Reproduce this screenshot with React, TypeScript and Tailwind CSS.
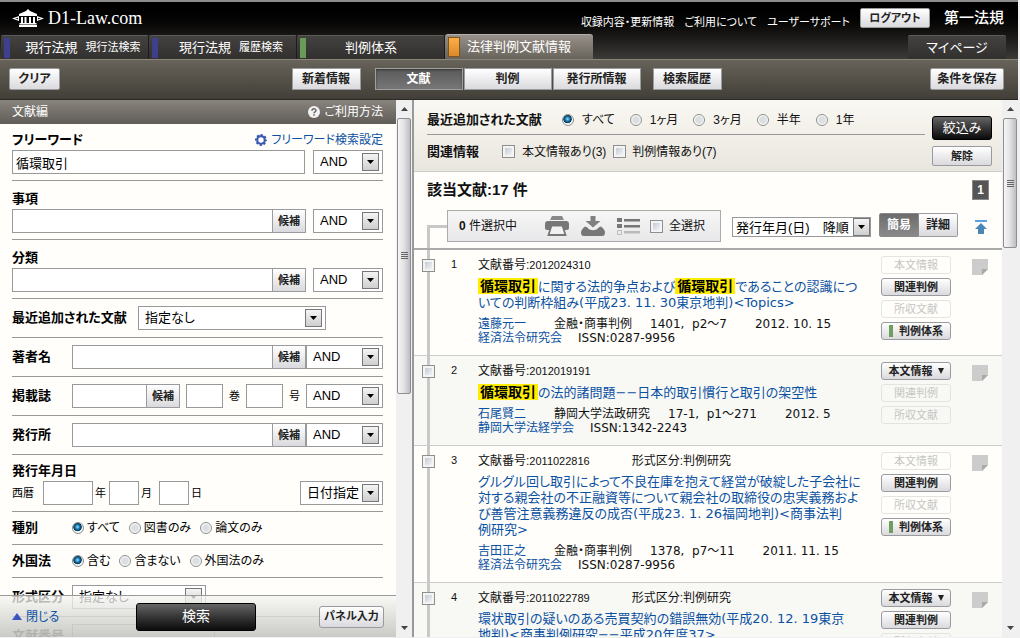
import type { ReactNode } from 'react';
import clsx from 'clsx';

const link = 'text-[#0b51a2] hover:underline';

function Button({ children, className }: { children: ReactNode; className?: string }) {
  return (
    <button
      type="button"
      className={clsx(
        'shrink-0 flex items-center justify-center border border-[#9a9b9f] bg-gradient-to-b from-white to-[#dadade] font-bold text-[#222] whitespace-nowrap',
        className
      )}
    >
      {children}
    </button>
  );
}

function DarkButton({ children, className }: { children: ReactNode; className?: string }) {
  return (
    <button
      type="button"
      className={clsx(
        'shrink-0 rounded-[3px] border border-black bg-gradient-to-b from-[#666] to-[#0c0c0c] text-white whitespace-nowrap',
        className
      )}
    >
      {children}
    </button>
  );
}

function Select({ label, value, className, small }: { label: string; value: string; className?: string; small?: boolean }) {
  return (
    <div className={clsx('relative shrink-0', small ? 'h-5' : 'h-6', className)}>
      <select
        aria-label={label}
        className={clsx(
          'appearance-none block w-full h-full border border-[#999] bg-white text-[13px] text-black',
          small ? 'pl-[3px]' : 'pl-[6px]'
        )}
      >
        <option>{value}</option>
      </select>
      <span
        className={clsx(
          'pointer-events-none absolute flex items-center justify-center w-[17px] border border-[#777] bg-gradient-to-b from-[#f4f4f4] to-[#cfcfcf]',
          small ? 'inset-y-px right-px' : 'inset-y-[3px] right-1'
        )}
      >
        <svg width="7" height="4" viewBox="0 0 7 4">
          <path d="M0 0h7L3.5 4z" fill="#000" />
        </svg>
      </span>
    </div>
  );
}

function TextBox({ label, className, value }: { label: string; className?: string; value?: string }) {
  return (
    <input
      type="text"
      aria-label={label}
      defaultValue={value}
      className={clsx('h-6 min-w-0 border border-[#999] bg-white px-[3px] text-[13px] text-black', className)}
    />
  );
}

function CandidateInput({ label, className }: { label: string; className?: string }) {
  return (
    <div className={clsx('flex', className)}>
      <TextBox label={label} className="flex-1 border-r-0" />
      <Button className="w-[34px] h-6 text-[11px]">候補</Button>
    </div>
  );
}

function Radio({ name, label, checked, className }: { name: string; label: string; checked?: boolean; className?: string }) {
  return (
    <label className={clsx('flex items-center whitespace-nowrap', className)}>
      <input
        type="radio"
        name={name}
        defaultChecked={checked}
        className="appearance-none size-3 shrink-0 rounded-full border border-[#8e8f8f] bg-[radial-gradient(circle,#dcdfe2_40%,#fff_75%)] checked:bg-[radial-gradient(circle_at_45%_40%,#7fd0f0_5%,#0f6fa8_30%,#0b3353_48%,#f0f4f6_56%)]"
      />
      {label}
    </label>
  );
}

function CheckBox({ label, children, className }: { label?: string; children?: ReactNode; className?: string }) {
  return (
    <label className={clsx('flex items-center whitespace-nowrap', className)}>
      <input
        type="checkbox"
        aria-label={label}
        className="appearance-none size-[13px] shrink-0 border border-[#8e8f8f] bg-gradient-to-br from-[#b9bfca] to-white shadow-[inset_0_0_0_2px_#f4f4f4] checked:bg-[#0f6fa8]"
      />
      {children}
    </label>
  );
}

function Scrollbar({ thumb }: { thumb: string }) {
  return (
    <div aria-hidden="true" className="w-4 shrink-0 flex flex-col bg-[#f0f0f0] px-px">
      <div className="h-[18px] flex items-center justify-center">
        <svg width="7" height="4" viewBox="0 0 7 4">
          <path d="M0 4h7L3.5 0z" fill="#444" />
        </svg>
      </div>
      <div className="flex-1 min-h-0">
        <div
          className={clsx(
            'flex flex-col items-center justify-center gap-px rounded-[2px] border border-[#8d8d92] bg-gradient-to-r from-[#f6f6f6] via-[#e2e2e4] to-[#bdbdc2]',
            thumb
          )}
        >
          {[0, 1, 2, 3].map((i) => (
            <span key={i} className="w-[7px] h-px bg-[#666]" />
          ))}
        </div>
      </div>
      <div className="h-[18px] flex items-center justify-center">
        <svg width="7" height="4" viewBox="0 0 7 4">
          <path d="M0 0h7L3.5 4z" fill="#444" />
        </svg>
      </div>
    </div>
  );
}

const tabs = [
  { name: '現行法規', sub: '現行法検索', bar: 'bg-[#3f3f8f]' },
  { name: '現行法規', sub: '履歴検索', bar: 'bg-[#3f3f8f]' },
  { name: '判例体系', sub: '', bar: 'bg-[#6a9a58]' },
];

function Header() {
  return (
    <header>
      <div className="border-t-2 border-[#8c8c8c] bg-gradient-to-b from-black to-[#3d3b38] text-white">
        <div className="h-8 flex items-center pl-3 pr-[14px]">
          <svg width="32" height="18" viewBox="0 0 32 18" fill="#fff">
            <path d="M16 0l2 2 7 3v2H7V5l7-3z" />
            <path d="M9 8h2v6H9zM12.5 8h2v6h-2zM17 8h2v6h-2zM21 8h2v6h-2zM7.500 14h17v1.500h-17zM7 16h18v2H7z" />
            <path d="M0 9.500l7-2.500v5zM32 9.500l-7-2.500v5z" />
            <path d="M3 9.500l3-.8v1.600zM29 9.500l-3-.8v1.600z" fill="#111" />
          </svg>
          <h1 className="ml-1 flex-1 text-[18px] leading-6 font-['Liberation_Serif',serif]">D1-Law.com</h1>
          <nav className="flex gap-[10px] pt-2 pr-[10px] text-[11px]">
            <a href="#updates">収録内容・更新情報</a>
            <a href="#about">ご利用について</a>
            <a href="#support">ユーザーサポート</a>
          </nav>
          <Button className="w-[70px] h-5 rounded-[2px] text-[11px]">ログアウト</Button>
          <span className="ml-[14px] text-[15px] font-medium">第一法規</span>
        </div>
        <nav className="h-[25px] flex items-end pl-px pr-3 text-[13px]">
          {tabs.map((tab, i) => (
            <a
              key={i}
              href={`#tab${i}`}
              className="w-[148px] h-6 flex items-center rounded-t-[2px] border-t border-r border-t-[#5d5b58] border-r-[#1d1c1b] bg-gradient-to-b from-[#434240] to-[#31302e] pl-[3px]"
            >
              <span className={clsx('w-[6px] h-5', tab.bar)} />
              <span className={clsx('flex-1 flex items-center justify-center gap-2 whitespace-nowrap', tab.sub ? 'pl-2' : 'pr-2')}>
                {tab.name}
                {tab.sub && <span className="text-[11px]">{tab.sub}</span>}
              </span>
            </a>
          ))}
          <a
            href="#bunken"
            className="w-[148px] h-[25px] flex items-center rounded-t-[3px] border-t border-[#b5aea8] bg-gradient-to-b from-[#98908a] to-[#67635a] pl-[3px] whitespace-nowrap"
          >
            <span className="mr-[7px] w-3 h-5 border border-[#7d5420] bg-gradient-to-b from-[#ffae45] to-[#d98a2b]" />
            法律判例文献情報
          </a>
          <a
            href="#mypage"
            className="ml-auto w-[98px] h-6 flex items-center justify-center rounded-t-[2px] border-t border-[#5d5b58] bg-gradient-to-b from-[#434240] to-[#31302e]"
          >
            マイページ
          </a>
        </nav>
      </div>
      <div className="h-[41px] grid grid-cols-[1fr_auto_1fr] items-start border-t border-b border-t-[#8a8578] border-b-[#2b2924] bg-gradient-to-b from-[#67635a] to-[#423f38] pt-2 pl-[9px] pr-[14px] text-[12px]">
        <Button className="w-[51px] h-[22px] rounded-[2px]">クリア</Button>
        <div className="flex">
          <Button className="w-[69px] h-[22px] mr-[14px]">新着情報</Button>
          <div className="flex gap-px">
            <button
              type="button"
              className="w-[88px] h-[22px] border border-[#a0a0a0] bg-gradient-to-b from-[#5a5a5a] to-[#777] text-white font-bold shadow-[inset_0_1px_2px_#333]"
            >
              文献
            </button>
            <Button className="w-[88px] h-[22px]">判例</Button>
            <Button className="w-[88px] h-[22px]">発行所情報</Button>
          </div>
          <Button className="w-[69px] h-[22px] ml-[12px]">検索履歴</Button>
        </div>
        <Button className="w-[74px] h-[22px] rounded-[2px] justify-self-end">条件を保存</Button>
      </div>
    </header>
  );
}

function Row({ label, children }: { label: string; children: ReactNode }) {
  return (
    <div className="flex items-center py-[7px] border-b border-[#999]">
      <span className="w-[60px] shrink-0 text-[13px] font-bold whitespace-nowrap">{label}</span>
      {children}
    </div>
  );
}

function SearchPanel() {
  return (
    <aside className="w-[414px] shrink-0 flex border-r-2 border-[#999]">
      <div className="relative flex-1 min-w-0 overflow-hidden bg-[#fffefa]">
        <div className="h-6 flex items-center justify-between bg-gradient-to-b from-[#89847e] to-[#605c57] pl-3 pr-[13px] text-[12px] text-white">
          <h2>文献編</h2>
          <a href="#help" className="flex items-center gap-1">
            <svg width="12" height="12" viewBox="0 0 12 12">
              <circle cx="6" cy="6" r="6" fill="#f2f2f2" />
              <path d="M4 4.700C4 2.200 8 2.300 8 4.500 8 5.900 6 5.800 6 7.300M6 8.300v1.500" fill="none" stroke="#6d6863" strokeWidth="1.500" />
            </svg>
            ご利用方法
          </a>
        </div>

        <form className="pl-3 pr-[13px] text-[12px] text-black">
          <div className="pt-[6px] pb-[6px] border-b border-[#999]">
            <div className="h-5 flex items-center justify-between">
              <span className="text-[13px] font-bold">フリーワード</span>
              <a href="#settings" className={clsx('flex items-center gap-1', link)}>
                <svg width="12" height="12" viewBox="0 0 12 12" fill="none" stroke="#3a5bb0">
                  <circle cx="6" cy="6" r="3.800" strokeWidth="2.200" />
                  <circle cx="6" cy="6" r="5.100" strokeWidth="1.800" strokeDasharray="2.100 1.905" strokeDashoffset="1" />
                </svg>
                フリーワード検索設定
              </a>
            </div>
            <div className="flex gap-2">
              <TextBox label="フリーワード" value="循環取引" className="flex-1" />
              <Select label="フリーワード条件" value="AND" className="w-[70px]" />
            </div>
          </div>
          {['事項', '分類'].map((name) => (
            <div key={name} className="pt-2 pb-[6px] border-b border-[#999]">
              <div className="h-5 flex items-center text-[13px] font-bold">{name}</div>
              <div className="flex gap-[7px]">
                <CandidateInput label={name} className="flex-1" />
                <Select label={`${name}条件`} value="AND" className="w-[70px]" />
              </div>
            </div>
          ))}
          <div className="flex items-center gap-[14px] py-[7px] border-b border-[#999]">
            <span className="w-28 text-[13px] font-bold whitespace-nowrap">最近追加された文献</span>
            <Select label="最近追加された文献" value="指定なし" className="w-[188px]" />
          </div>
          <Row label="著者名">
            <CandidateInput label="著者名" className="flex-1" />
            <Select label="著者名条件" value="AND" className="w-[77px]" />
          </Row>
          <Row label="掲載誌">
            <CandidateInput label="掲載誌" className="w-[108px]" />
            <TextBox label="巻" className="w-[37px] ml-[6px]" />
            <span className="mx-[6px] text-[11px]">巻</span>
            <TextBox label="号" className="w-[37px]" />
            <span className="ml-[6px] text-[11px]">号</span>
            <Select label="掲載誌条件" value="AND" className="w-[77px] ml-auto" />
          </Row>
          <Row label="発行所">
            <CandidateInput label="発行所" className="flex-1" />
            <Select label="発行所条件" value="AND" className="w-[77px]" />
          </Row>
          <div className="pt-[6px] pb-[6px] border-b border-[#999]">
            <div className="h-5 flex items-center text-[13px] font-bold">発行年月日</div>
            <div className="flex items-center text-[11px]">
              <span className="w-[31px]">西暦</span>
              <TextBox label="年" className="w-[50px]" />
              <span className="w-4 pl-[2px]">年</span>
              <TextBox label="月" className="w-[30px]" />
              <span className="w-5 pl-[2px]">月</span>
              <TextBox label="日" className="w-[30px]" />
              <span className="pl-[2px]">日</span>
              <Select label="日付指定" value="日付指定" className="w-[83px] ml-auto" />
            </div>
          </div>
          <div className="h-[33px] flex items-center gap-[9px] border-b border-[#999]">
            <span className="w-[51px] text-[13px] font-bold">種別</span>
            <Radio name="kind" label="すべて" checked className="gap-[3px]" />
            <Radio name="kind" label="図書のみ" className="gap-[3px]" />
            <Radio name="kind" label="論文のみ" className="gap-[3px]" />
          </div>
          <div className="h-[33px] flex items-center gap-[9px] border-b border-[#999]">
            <span className="w-[51px] text-[13px] font-bold">外国法</span>
            <Radio name="foreign" label="含む" checked className="gap-[3px]" />
            <Radio name="foreign" label="含まない" className="gap-[3px]" />
            <Radio name="foreign" label="外国法のみ" className="gap-[3px]" />
          </div>
          <Row label="形式区分">
            <Select label="形式区分" value="指定なし" className="w-[134px]" />
          </Row>
          <Row label="文献番号">
            <TextBox label="文献番号" className="w-[143px]" />
          </Row>
        </form>

        {/* sticky footer over the form */}
        <div className="absolute inset-x-0 bottom-0 h-[42px] flex items-center justify-between border-t border-[#999] bg-gradient-to-b from-[#f6f6f3]/75 to-[#c4c4c0]/90 pl-3 pr-3">
          <a href="#close" className={clsx('w-[61px] flex items-center gap-1 text-[12px]', link)}>
            <svg width="10" height="7" viewBox="0 0 10 7">
              <path d="M0 7h10L5 0z" fill="#3a55c0" />
            </svg>
            閉じる
          </a>
          <DarkButton className="w-[120px] h-7 text-[14px]">検索</DarkButton>
          <Button className="w-[65px] h-[22px] rounded-[3px] text-[11px]">パネル入力</Button>
        </div>
      </div>
      <Scrollbar thumb="h-[55%]" />
    </aside>
  );
}

function Mark() {
  return <mark className="bg-[#ffed00] px-[2px] text-[14px] font-bold text-black">循環取引</mark>;
}

type Action = { label: string; off?: boolean; green?: boolean; menu?: boolean };

type Result = {
  id: string;
  category?: string;
  title: ReactNode;
  source?: {
    author: string;
    journal: string;
    volume: string;
    date: string;
    publisher: string;
    issn: string;
  };
  actions: Action[];
};

const results: Result[] = [
  {
    id: '2012024310',
    title: (
      <>
        <Mark />に関する法的争点および<Mark />であることの認識につ
        <br />
        いての判断枠組み(平成23. 11. 30東京地判)&lt;Topics&gt;
      </>
    ),
    source: {
      author: '遠藤元一',
      journal: '金融・商事判例',
      volume: '1401,  p2～7',
      date: '2012. 10. 15',
      publisher: '経済法令研究会',
      issn: 'ISSN:0287-9956',
    },
    actions: [
      { label: '本文情報', off: true },
      { label: '関連判例' },
      { label: '所収文献', off: true },
      { label: '判例体系', green: true },
    ],
  },
  {
    id: '2012019191',
    title: (
      <>
        <Mark />の法的諸問題−−日本的取引慣行と取引の架空性
      </>
    ),
    source: {
      author: '石尾賢二',
      journal: '静岡大学法政研究',
      volume: '17-1,  p1～271',
      date: '2012. 5',
      publisher: '静岡大学法経学会',
      issn: 'ISSN:1342-2243',
    },
    actions: [
      { label: '本文情報', menu: true },
      { label: '関連判例', off: true },
      { label: '所収文献', off: true },
    ],
  },
  {
    id: '2011022816',
    category: '形式区分:判例研究',
    title: (
      <>
        グルグル回し取引によって不良在庫を抱えて経営が破綻した子会社に
        <br />
        対する親会社の不正融資等について親会社の取締役の忠実義務およ
        <br />
        び善管注意義務違反の成否(平成23. 1. 26福岡地判)&lt;商事法判
        <br />
        例研究&gt;
      </>
    ),
    source: {
      author: '吉田正之',
      journal: '金融・商事判例',
      volume: '1378,  p7～11',
      date: '2011. 11. 15',
      publisher: '経済法令研究会',
      issn: 'ISSN:0287-9956',
    },
    actions: [
      { label: '本文情報', off: true },
      { label: '関連判例' },
      { label: '所収文献', off: true },
      { label: '判例体系', green: true },
    ],
  },
  {
    id: '2011022789',
    category: '形式区分:判例研究',
    title: (
      <>
        環状取引の疑いのある売買契約の錯誤無効(平成20. 12. 19東京
        <br />
        地判)&lt;商事判例研究−−平成20年度37&gt;
      </>
    ),
    actions: [
      { label: '本文情報', menu: true },
      { label: '関連判例' },
      { label: '所収文献', off: true },
    ],
  },
];

function ActionButton({ action }: { action: Action }) {
  if (action.off) {
    return (
      <button type="button" disabled className="w-[70px] h-[18px] rounded-[3px] border border-[#e3e3e0] text-[11px] leading-4 text-[#c6c6c3]">
        {action.label}
      </button>
    );
  }
  return (
    <Button className="w-[70px] h-[18px] rounded-[3px] text-[11px] leading-4">
      {action.green && <span className="mr-[6px] w-1 h-3 bg-[#6f9f60]" />}
      {action.label}
      {action.menu && (
        <svg className="ml-[5px]" width="6" height="6" viewBox="0 0 6 6">
          <path d="M0 0h6L3 6z" fill="#222" />
        </svg>
      )}
    </Button>
  );
}

function ResultItem({ item, index }: { item: Result; index: number }) {
  return (
    <li className={clsx('flex border-b border-[#ccc] pr-[14px]', index % 2 ? 'bg-[#f8f8f5]' : 'bg-[#fffefb]')}>
      <div className="relative w-[29px] shrink-0 flex justify-center pt-[9px]">
        <span className="absolute inset-y-0 left-[13px] w-[3px] bg-[#c8c8c8]" />
        <CheckBox label={`${index + 1}件目を選択`} className="relative self-start" />
      </div>
      <span className="w-[35px] shrink-0 pl-2 pt-[6px] text-[11px] leading-4">{index + 1}</span>
      <div className="flex-1 min-w-0 pt-[7px] pb-[10px] text-[12px] whitespace-nowrap">
        <div className="flex gap-[42px] leading-4">
          <span>
            文献番号:<span className="text-[11px]">{item.id}</span>
          </span>
          <span>{item.category}</span>
        </div>
        <a
          href={`#doc${item.id}`}
          className={clsx("block mt-[5px] text-[13px] leading-4 font-['DejaVu_Sans','Noto_Sans_CJK_JP',sans-serif]", link)}
        >
          {item.title}
        </a>
        {item.source && (
          <div className="mt-[6px] leading-[14px] font-['DejaVu_Sans','Noto_Sans_CJK_JP',sans-serif]">
            <div className="flex">
              <a href="#author" className={clsx('mr-7', link)}>{item.source.author}</a>
              <span className="mr-[18px]">{item.source.journal}</span>
              <span className="mr-7 whitespace-pre">{item.source.volume}</span>
              <span>{item.source.date}</span>
            </div>
            <div className="flex gap-4">
              <a href="#publisher" className={link}>{item.source.publisher}</a>
              <span>{item.source.issn}</span>
            </div>
          </div>
        )}
      </div>
      <div className="shrink-0 flex flex-col gap-1 pt-[6px]">
        {item.actions.map((action) => (
          <ActionButton key={action.label} action={action} />
        ))}
      </div>
      <svg className="shrink-0 ml-[21px] mt-[9px]" width="16" height="16" viewBox="0 0 16 16">
        <path d="M0 0h16v10l-6 6H0z" fill="#ccc" />
        <path d="M16 10l-6 6v-6z" fill="#aaa" />
      </svg>
    </li>
  );
}

function Results() {
  return (
    <main className="flex-1 min-w-0 flex">
      <div className="flex-1 min-w-0 overflow-hidden bg-[#fffefb]">
        <div className="flex gap-[7px] border-b border-[#ccc] bg-gradient-to-b from-[#faf8f2] to-[#e9e6df] pl-[13px] pr-[10px] text-[12px]">
          <div className="flex-1">
            <div className="h-[35px] flex items-center gap-[15px] border-b border-[#999] pt-[6px]">
              <span className="w-[120px] text-[13px] font-bold whitespace-nowrap">最近追加された文献</span>
              {['すべて', '1ヶ月', '3ヶ月', '半年', '1年'].map((period, i) => (
                <Radio key={period} name="period" label={period} checked={i === 0} className="gap-2" />
              ))}
            </div>
            <div className="h-9 flex items-center gap-[7px] pb-[3px]">
              <span className="w-[68px] text-[13px] font-bold">関連情報</span>
              <CheckBox className="gap-[7px]">本文情報あり(3)</CheckBox>
              <CheckBox className="gap-[6px]">判例情報あり(7)</CheckBox>
            </div>
          </div>
          <div className="flex flex-col gap-[6px] pt-4">
            <DarkButton className="w-[60px] h-6 text-[13px] leading-5">絞込み</DarkButton>
            <Button className="w-[60px] h-5 rounded-[2px] text-[11px]">解除</Button>
          </div>
        </div>

        <div className="flex items-center justify-between pt-[6px] pl-[13px] pr-[13px]">
          <h2 className="text-[15px] leading-6 font-bold">該当文献:17 件</h2>
          <button type="button" className="w-[17px] h-5 border border-[#888] bg-[#555] text-[12px] leading-4 font-bold text-white">1</button>
        </div>

        <div className="flex pt-2 pl-[13px] pr-[14px] border-b-2 border-[#aaa] text-[12px]">
          <div className="w-5 shrink-0 mt-[15px] border-t-[3px] border-l-[3px] border-[#c8c8c8]" />
          <div className="w-[274px] shrink-0 h-8 mb-[6px] flex items-center border border-[#aaa] bg-gradient-to-b from-[#f6f6f6] to-[#e8e8ea] pl-[11px]">
            <span className="w-[86px]">
              <b>0</b> 件選択中
            </span>
            <button type="button" aria-label="印刷">
              <svg width="24" height="20" viewBox="0 0 24 20">
                <path d="M7 0h10l2 4H5z" fill="#888" />
                <path d="M3 5h18q3 0 3 3v4q0 2-2 2H2q-2 0-2-2V8q0-3 3-3z" fill="#777" />
                <path d="M6.500 9.500h11l3 9.500h-17z" fill="#f2f2f2" stroke="#777" strokeWidth="1.800" />
              </svg>
            </button>
            <button type="button" aria-label="ダウンロード" className="ml-3">
              <svg width="24" height="20" viewBox="0 0 24 20">
                <path d="M9.500 0h5v5h5L12 11.500 4.500 5h5z" fill="#808080" />
                <path d="M4 10.500l2.500 1c1.500 3.500 9.500 3.500 11 0l2.500-1c2 1.500 4 3.500 4 6 0 2.500-1 3.500-3 3.500H3c-2 0-3-1-3-3.500 0-2.500 2-4.500 4-6z" fill="#777" />
              </svg>
            </button>
            <button type="button" aria-label="一覧" className="ml-3">
              <svg width="23" height="17" viewBox="0 0 23 17">
                <path d="M0 0h5v4H0zM7 1h16v2.500H7zM0 6h5v4H0zM7 7h16v2.500H7z" fill="#777" />
                <path d="M.5 12.500h4v4h-4z" fill="none" stroke="#bbb" />
                <path d="M7 13h16v2.500H7z" fill="#bbb" />
              </svg>
            </button>
            <CheckBox className="ml-[10px] gap-[6px]">全選択</CheckBox>
          </div>
          <Select label="並び順" value="発行年月(日)　降順" small className="w-[139px] ml-[11px] mt-[7px]" />
          <div className="flex ml-2 mt-[3px]">
            <button
              type="button"
              className="w-10 h-6 rounded-l-[2px] border border-[#888] bg-gradient-to-b from-[#6c6c6c] to-[#8a8a8a] font-bold text-white"
            >
              簡易
            </button>
            <Button className="w-[39px] h-6 rounded-r-[2px] border-l-0">詳細</Button>
          </div>
          <a href="#top" aria-label="先頭へ" className="ml-auto mt-[10px]">
            <svg width="14" height="15" viewBox="0 0 14 15">
              <path d="M1 0h12v2H1z" fill="#5ba3dc" />
              <path d="M7 3l6 6h-3v5H4V9H1z" fill="#4a86b8" />
            </svg>
          </a>
        </div>

        <ul>
          {results.map((item, i) => (
            <ResultItem key={item.id} item={item} index={i} />
          ))}
        </ul>
      </div>
      <Scrollbar thumb="h-[26%]" />
    </main>
  );
}

export default function App() {
  return (
    <div className="h-screen overflow-hidden flex flex-col bg-[#f0f0f0] pr-[2px] pb-px text-[#111] font-['Liberation_Sans','Noto_Sans_CJK_JP',sans-serif] [font-feature-settings:'palt']">
      <Header />
      <div className="flex-1 min-h-0 flex">
        <SearchPanel />
        <Results />
      </div>
    </div>
  );
}
